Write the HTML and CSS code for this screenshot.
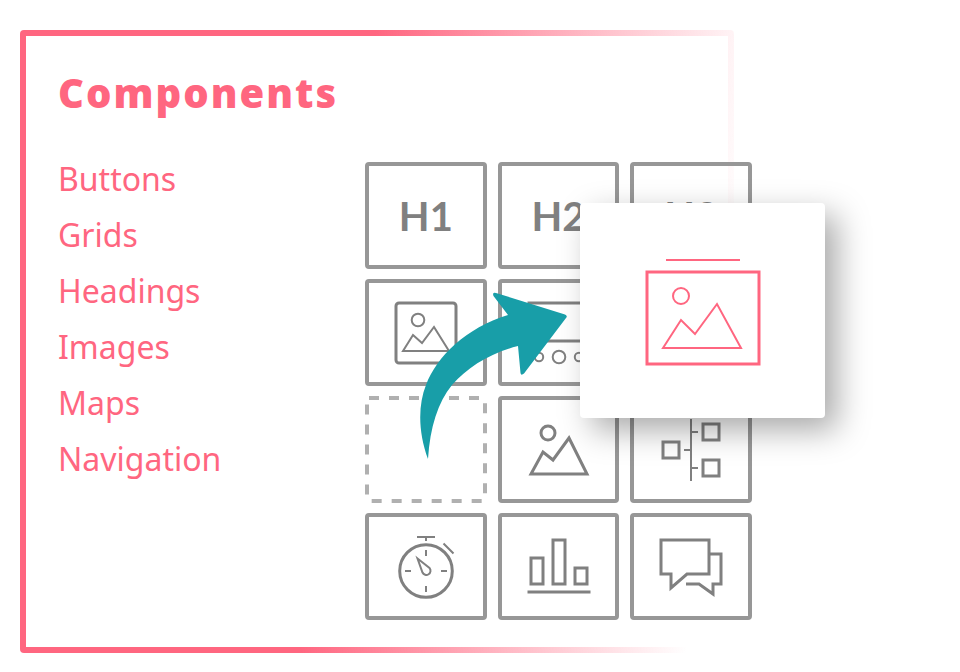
FILE: index.html
```html
<!DOCTYPE html>
<html lang="en">
<head>
<meta charset="utf-8">
<meta name="viewport" content="width=device-width, initial-scale=1">
<title>Components</title>
<link rel="stylesheet" href="styles.css">
</head>
<body>
<main class="panel">
  <h1 class="title">Components</h1>
  <div class="content">
    <ul class="categories">
      <li>Buttons</li>
      <li>Grids</li>
      <li>Headings</li>
      <li>Images</li>
      <li>Maps</li>
      <li>Navigation</li>
    </ul>
    <div class="library">
      <div class="tile">H1</div>
      <div class="tile">H2</div>
      <div class="tile">H3</div>
      <div class="tile">
        <svg class="icon" viewBox="369 283 114 99">
          <rect x="396" y="303" width="60" height="60" rx="3"/>
          <g class="thin"><circle cx="418" cy="320" r="6.3"/><path d="M403 351L413 335L422 343L434 327L449 351Z"/></g>
        </svg>
      </div>
      <div class="tile">
        <svg class="icon" viewBox="502 283 114 99">
          <rect x="529" y="303" width="60" height="38"/>
          <g class="thin"><circle cx="539" cy="357" r="4.2"/><circle cx="559" cy="357" r="6.3"/><circle cx="579" cy="357" r="4.2"/></g>
        </svg>
      </div>
      <div class="tile"></div>
      <div class="tile tile-empty">
        <svg class="outline" viewBox="365 396 122 107"><rect x="367" y="398" width="118" height="103" rx="2"/></svg>
      </div>
      <div class="tile">
        <svg class="icon" viewBox="502 400 114 99">
          <circle cx="548" cy="433" r="7"/><path d="M531 474L543 452L553 460L569 438L587 474Z"/>
        </svg>
      </div>
      <div class="tile">
        <svg class="icon" viewBox="634 400 114 99">
          <rect x="663" y="442" width="16" height="16"/><rect x="703" y="424" width="16" height="16"/><rect x="703" y="460" width="16" height="16"/>
          <path class="thin" d="M691 419V481M691 432H698M684 450H691M691 468H698"/>
        </svg>
      </div>
      <div class="tile">
        <svg class="icon" viewBox="369 517 114 99">
          <circle cx="426" cy="571" r="26.3"/>
          <path class="thin" d="M417 537H435M426 537V541M443.500 543.500L453.500 553.500M426 550V556M426 586V592M405 571H411M441 571H447M417.500 558.500L429.500 568A4.200 4.200 0 1 1 422.500 572.500Z"/>
        </svg>
      </div>
      <div class="tile">
        <svg class="icon" viewBox="502 517 114 99">
          <rect x="531" y="558" width="12" height="26"/><rect x="553" y="540" width="12" height="44"/><rect x="575" y="568" width="12" height="16"/>
          <path d="M527.500 592H590.500"/>
        </svg>
      </div>
      <div class="tile">
        <svg class="icon" viewBox="634 517 114 99">
          <path d="M661 540H709V574H687L671 588V574H661ZM709 554H721V584H713V594L699 584H686"/>
        </svg>
      </div>
      <div class="dragged">
        <svg class="dragged-icon" viewBox="640 250 125 121">
          <rect x="647" y="272" width="112" height="92"/>
          <path class="thin" d="M666 260H740M663 348L681 320L695 334L717 304L741 348Z"/><circle class="thin" cx="681" cy="296" r="8"/>
        </svg>
      </div>
      <svg class="arrow" viewBox="415 285 160 180">
        <path d="M428 459C418 432 418 405 426 385C437 356 466 328 508 315L493.500 296Q492 292 496 293L565 314.500Q568 316 566 318L524 373.500Q521 376 520.500 373L518 346C490 353 468 367 452 385C438 402 430 427 428 459Z"/>
      </svg>
    </div>
  </div>
</main>
</body>
</html>
```

FILE: styles.css
```css
* { box-sizing: border-box; }

body {
  margin: 0;
  background: #fff;
  color: #ff6680;
  font-family: Lato, "Noto Sans", sans-serif;
}

.panel {
  margin: 30px 226px 19px 20px;
  padding: 32px 0 27px 32px;
  border: 6px solid transparent;
  border-radius: 4px;
  background:
    linear-gradient(#fff, #fff) padding-box,
    linear-gradient(97deg, #ff6680 45%, rgba(255, 102, 128, 0) 94%) border-box;
}

.title {
  margin: 0;
  font-family: "Open Sans", "Noto Sans", sans-serif;
  font-size: 40px;
  font-weight: 800;
  line-height: 50px;
  letter-spacing: 2px;
}

.content {
  display: flex;
  justify-content: space-between;
  align-items: flex-start;
  padding-top: 44px;
}

.categories {
  margin: -11px 0 0;
  padding: 0;
  list-style: none;
  font-family: "Noto Sans", sans-serif;
  font-size: 32px;
  line-height: 56px;
}

.library {
  position: relative;
  display: grid;
  grid-template-columns: repeat(3, minmax(0, 1fr));
  grid-auto-rows: 107px;
  gap: 10px 11px;
  flex: 0 0 387px;
  margin-right: -24px;
}

.tile {
  display: flex;
  align-items: center;
  justify-content: center;
  border: 4px solid #979797;
  border-radius: 4px;
  color: #808080;
  font-size: 40px;
  font-weight: 700;
}

.tile-empty { border: 0; }

svg { display: block; flex: none; }

.icon {
  width: 114px;
  height: 99px;
  fill: none;
  stroke: #808080;
  stroke-width: 3;
}

.thin { stroke-width: 2; }

.outline {
  width: 122px;
  height: 107px;
  fill: none;
  stroke: #b0b0b0;
  stroke-width: 4;
  stroke-dasharray: 10 10;
}

.dragged {
  position: absolute;
  top: 41px;
  left: 215px;
  display: flex;
  align-items: center;
  justify-content: center;
  width: 245px;
  height: 215px;
  border-radius: 4px;
  background: #fff;
  box-shadow: 12px 12px 32px rgba(0, 0, 0, 0.34);
}

.dragged-icon {
  width: 125px;
  height: 121px;
  fill: none;
  stroke: #ff6680;
  stroke-width: 3;
}

.arrow {
  position: absolute;
  top: 123px;
  left: 50px;
  width: 160px;
  height: 180px;
  fill: #189ea8;
}
```
